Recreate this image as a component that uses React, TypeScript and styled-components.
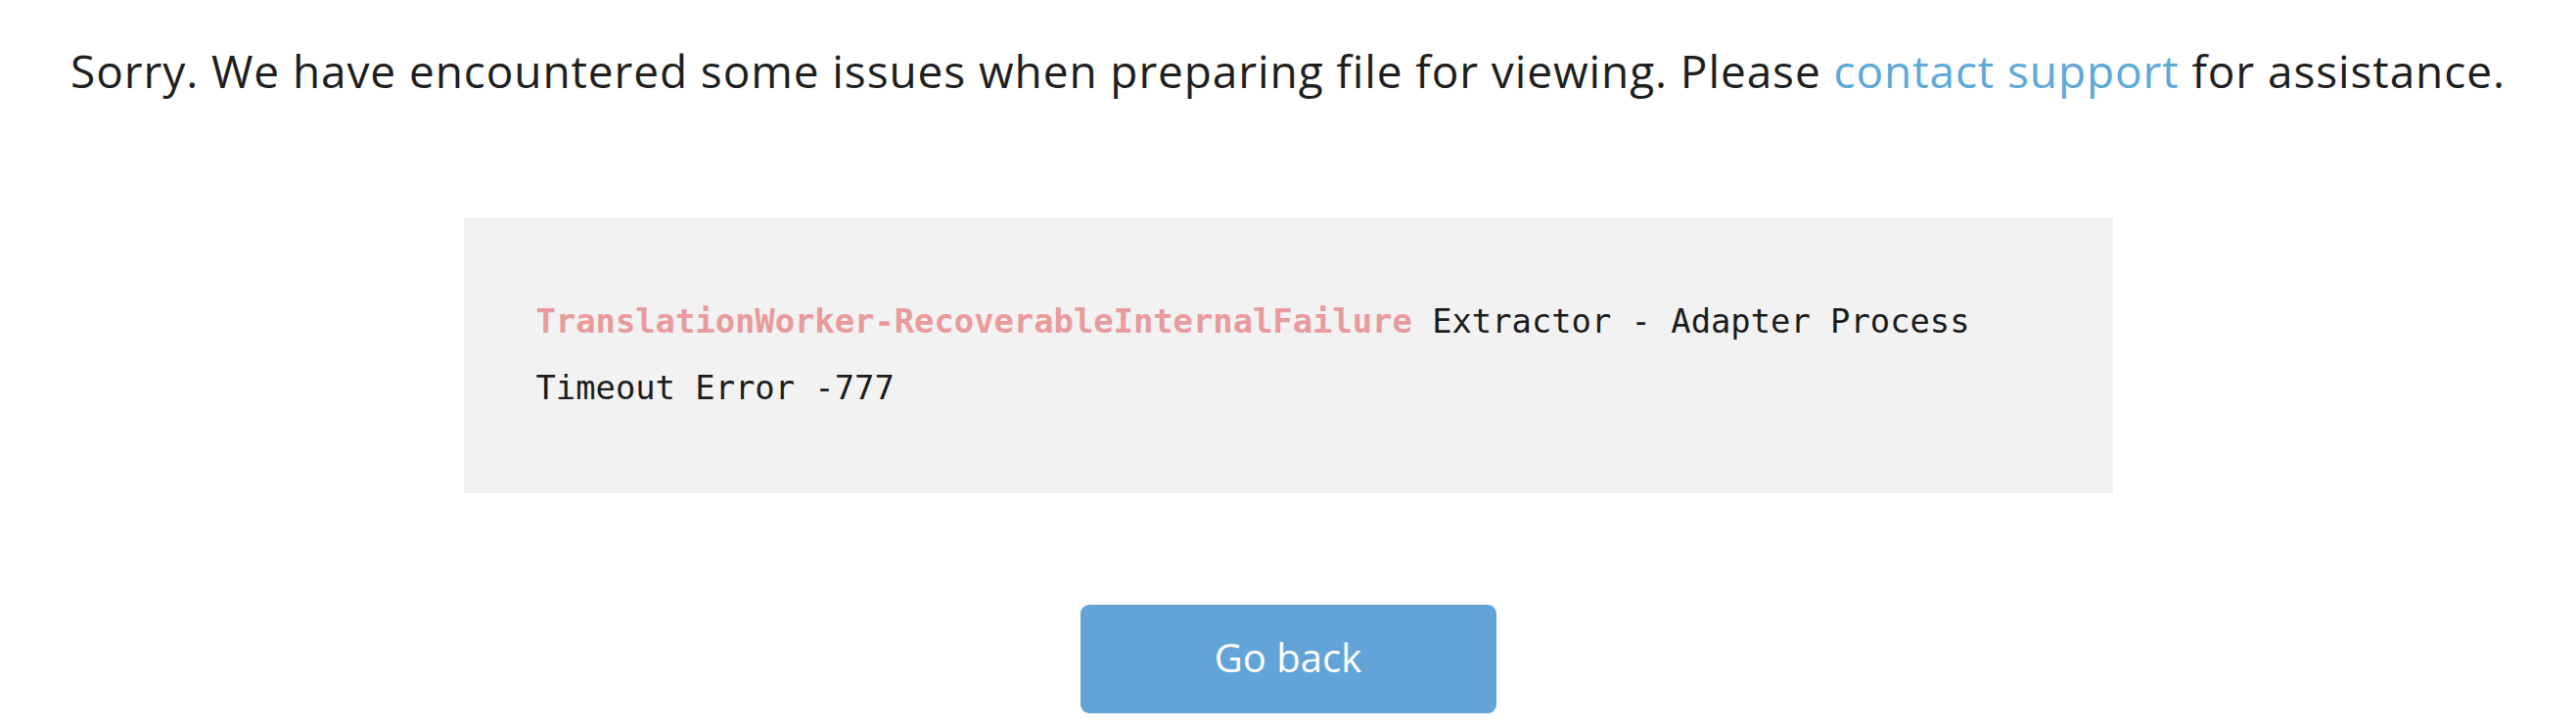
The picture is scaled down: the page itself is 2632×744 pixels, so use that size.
import React from "react";
import styled, { createGlobalStyle } from "styled-components";

const LINK_COLOR = "#5ea8da";
const BUTTON_COLOR = "#63a4d8";

const GlobalStyle = createGlobalStyle`
	html, body {
		margin: 0;
		padding: 0;
		background: #ffffff;
	}
	body {
		font-family: "Open Sans", "Noto Sans", sans-serif;
		color: #1f1f1f;
	}
`;

const Page = styled.div`
	display: flex;
	flex-direction: column;
	align-items: center;
	width: 100%;
	padding-top: 42px;
`;

const Message = styled.p`
	margin: 0;
	font-size: 46px;
	line-height: 60px;
	text-align: center;
	white-space: nowrap;
	letter-spacing: 0.9px;

	a {
		color: ${LINK_COLOR};
		text-decoration: none;
	}
`;

const ErrorBox = styled.div`
	box-sizing: border-box;
	width: 1685px;
	margin-top: 120px;
	padding: 73px 74px;
	background: #f2f2f2;
	font-family: "DejaVu Sans Mono", "Liberation Mono", monospace;
	font-size: 33.8px;
	line-height: 68px;
	color: #1c1c1c;
`;

const ErrorCode = styled.span`
	color: #e99b9b;
	font-weight: bold;
`;

const BackButton = styled.button`
	box-sizing: border-box;
	width: 425px;
	height: 111px;
	margin-top: 114px;
	padding: 0 0 5px;
	border: none;
	border-radius: 9px;
	background: ${BUTTON_COLOR};
	color: #ffffff;
	font-family: "Open Sans", "Noto Sans", sans-serif;
	font-size: 40px;
	cursor: pointer;
	transition: all .2s ease-in-out;

	&:hover {
		background: #4f93cb;
	}
`;

const App: React.FC = () => {
	return (
		<>
			<GlobalStyle />
			<Page>
				<Message>
					Sorry. We have encountered some issues when preparing file for viewing. Please{" "}
					<a href="#">contact support</a> for assistance.
				</Message>
				<ErrorBox>
					<ErrorCode>TranslationWorker-RecoverableInternalFailure</ErrorCode> Extractor - Adapter Process
					Timeout Error -777
				</ErrorBox>
				<BackButton>Go back</BackButton>
			</Page>
		</>
	);
};

export default App;
